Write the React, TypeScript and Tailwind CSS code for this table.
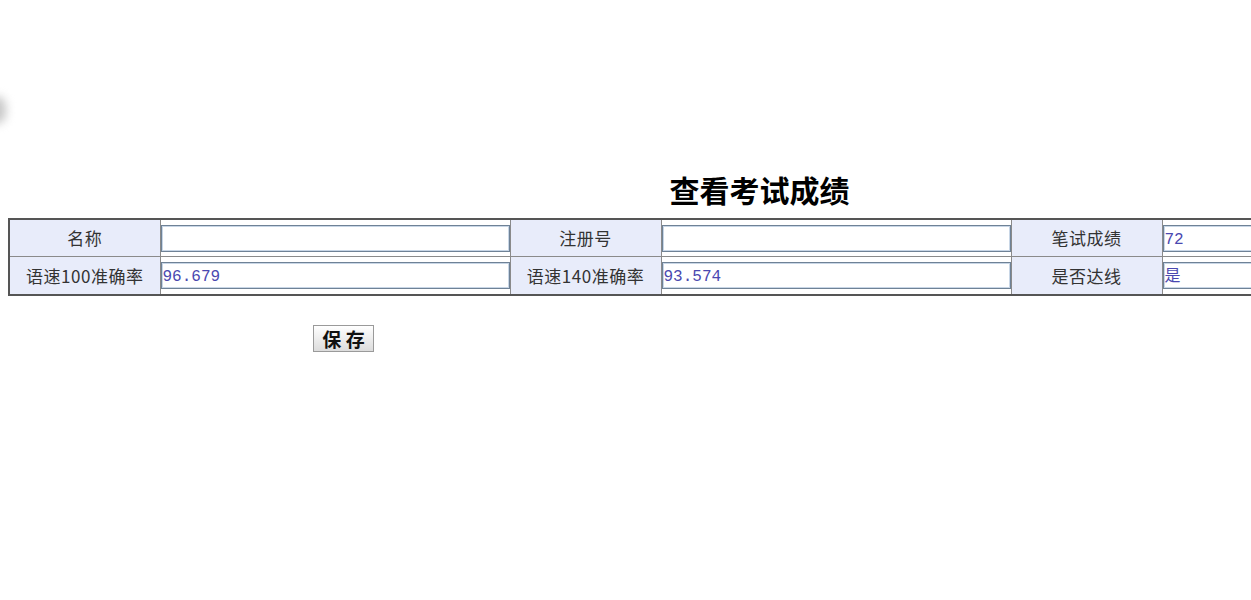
const cjk = "font-['Noto_Sans_CJK_SC','Noto_Sans',sans-serif]";

const Label = ({ text }: { text: string }) => (
  <td className={`w-[151px] border border-[#8a8a8a] bg-[#e8ecfa] text-center text-[17px] tracking-[0.5px] text-[#333] ${cjk}`}>
    {text}
  </td>
);

const Value = ({ value, tall }: { value: string; tall?: boolean }) => (
  <td className={`w-[350px] border border-[#8a8a8a] p-0 ${tall ? "pt-[5px] pb-[4px]" : "pt-[4px] pb-[3px]"}`}>
    <div className="flex h-[27px] items-center border border-[#6f8296] bg-white pl-[1px] pt-[3px] shadow-[inset_0_0_0_1px_#c8d6e6] text-[16px] text-[#4a48b0] font-['Liberation_Mono','Noto_Sans_CJK_SC',monospace]">
      {value}
    </div>
  </td>
);

export default function App() {
  return (
    <div className="relative h-[600px] w-full overflow-hidden bg-white">
      <div className="absolute left-[-14px] top-[96px] h-[28px] w-[20px] rounded-full bg-[#c8c8c8] blur-[5px]" />

      <div className="ml-[8px] w-[1503px] pt-[169px]">
        <h1 className={`text-center text-[30px] font-bold leading-[40px] text-black ${cjk}`}>
          查看考试成绩
        </h1>

        <table className="mt-[9px] w-full table-fixed border-collapse border-t-2 border-b-2 border-l-2 border-[#555]">
          <tbody>
            <tr className="h-[37px]">
              <Label text="名称" />
              <Value value="" />
              <Label text="注册号" />
              <Value value="" />
              <Label text="笔试成绩" />
              <Value value="72" />
            </tr>
            <tr className="h-[39px]">
              <Label text="语速100准确率" />
              <Value value="96.679" tall />
              <Label text="语速140准确率" />
              <Value value="93.574" tall />
              <Label text="是否达线" />
              <Value value="是" tall />
            </tr>
          </tbody>
        </table>

        <div className="flex pl-[305px] pt-[29px]">
          <button
            className={`flex h-[27px] w-[61px] items-center justify-center border border-[#9a9a9a] bg-gradient-to-b from-[#ffffff] to-[#dcdcdc] text-[19px] font-bold leading-none text-[#111] ${cjk}`}
          >
            保 存
          </button>
        </div>
      </div>
    </div>
  );
}
